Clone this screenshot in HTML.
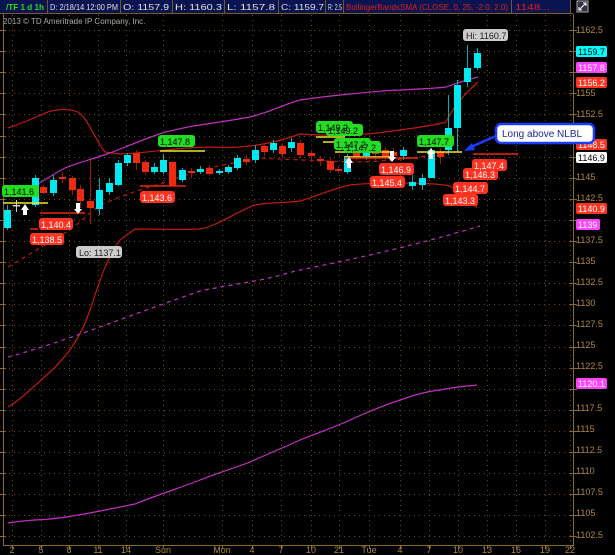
<!DOCTYPE html>
<html><head><meta charset="utf-8"><style>
html,body{margin:0;padding:0;background:#000;width:615px;height:555px;overflow:hidden;font-family:"Liberation Sans",sans-serif}
svg{position:absolute;left:0;top:0}
</style></head><body>
<svg width="615" height="555" viewBox="0 0 615 555" xmlns="http://www.w3.org/2000/svg" font-family="Liberation Sans, sans-serif">
<rect width="615" height="555" fill="#000"/>
<!-- header -->
<rect x="0" y="0" width="571" height="13" fill="#0a1450"/>
<line x1="0" y1="13.5" x2="573" y2="13.5" stroke="#7a5a20"/>
<g stroke="#6a5a30" stroke-width="1">
<line x1="47.5" y1="0" x2="47.5" y2="13"/><line x1="120.5" y1="0" x2="120.5" y2="13"/><line x1="172.5" y1="0" x2="172.5" y2="13"/><line x1="224.5" y1="0" x2="224.5" y2="13"/><line x1="278.5" y1="0" x2="278.5" y2="13"/><line x1="325.5" y1="0" x2="325.5" y2="13"/><line x1="343.5" y1="0" x2="343.5" y2="13"/><line x1="511.5" y1="0" x2="511.5" y2="13"/><line x1="570.5" y1="0" x2="570.5" y2="13"/>
</g>
<g font-size="8.5" fill="#e0e0e0" lengthAdjust="spacingAndGlyphs">
<text x="6" y="10" fill="#22dd22" font-weight="bold" textLength="38" lengthAdjust="spacingAndGlyphs">/TF 1 d 1h</text>
<text x="50" y="10" textLength="68" lengthAdjust="spacingAndGlyphs">D: 2/18/14 12:00 PM</text>
<text x="123" y="10" textLength="46" lengthAdjust="spacingAndGlyphs">O: 1157.9</text>
<text x="175" y="10" textLength="47" lengthAdjust="spacingAndGlyphs">H: 1160.3</text>
<text x="227" y="10" textLength="48" lengthAdjust="spacingAndGlyphs">L: 1157.8</text>
<text x="281" y="10" textLength="43" lengthAdjust="spacingAndGlyphs">C: 1159.7</text>
<text x="328" y="10" textLength="14" lengthAdjust="spacingAndGlyphs">R: 2.5</text>
<text x="346" y="10" fill="#e02020" textLength="162" lengthAdjust="spacingAndGlyphs">BollingerBandsSMA (CLOSE, 0, 25, -2.0, 2.0)</text>
<text x="515" y="10" fill="#e02020" textLength="35" lengthAdjust="spacingAndGlyphs">1148...</text>
</g>
<rect x="577" y="1" width="11" height="11" fill="#334" stroke="#aaa"/>
<path d="M579 10 L586 3 M583 3 H586 V6 M579 7 V10 H582" stroke="#fff" fill="none"/>
<text x="3" y="24" font-size="8" fill="#aaa">2013 © TD Ameritrade IP Company, Inc.</text>
<!-- grid -->
<g id="grid" stroke="#6a4a15" stroke-width="1" stroke-dasharray="1,4"></g>
<!-- axes -->
<line x1="573.5" y1="14" x2="573.5" y2="545" stroke="#8a6a2a"/>
<line x1="3.5" y1="14" x2="3.5" y2="545" stroke="#8a6a2a"/>
<line x1="3" y1="545.5" x2="574" y2="545.5" stroke="#8a6a2a"/>
<g id="ticks" stroke="#8a6a2a"></g>
<g font-size="9" fill="#b08a40">
<text x="576" y="33">1162.5</text>
<text x="576" y="96">1155</text>
<text x="576" y="117">1152.5</text>
<text x="576" y="180">1145</text>
<text x="576" y="201">1142.5</text>
<text x="576" y="243">1137.5</text>
<text x="576" y="264">1135</text>
<text x="576" y="285">1132.5</text>
<text x="576" y="306">1130</text>
<text x="576" y="327">1127.5</text>
<text x="576" y="348">1125</text>
<text x="576" y="369">1122.5</text>
<text x="576" y="411">1117.5</text>
<text x="576" y="432">1115</text>
<text x="576" y="453">1112.5</text>
<text x="576" y="474">1110</text>
<text x="576" y="495">1107.5</text>
<text x="576" y="516">1105</text>
<text x="576" y="538">1102.5</text>
</g>
<!-- right colored labels -->
<g font-size="9">
<rect x="576" y="46" width="31" height="11" rx="2" fill="#00ffff"/><text x="578" y="55" fill="#000">1159.7</text>
<rect x="576" y="62" width="31" height="11" rx="2" fill="#ff44ff"/><text x="578" y="71" fill="#fff">1157.8</text>
<rect x="576" y="77" width="31" height="11" rx="2" fill="#ff3322"/><text x="578" y="86" fill="#fff">1156.2</text>
<rect x="576" y="139" width="31" height="11" rx="2" fill="#ff3322"/><text x="578" y="148" fill="#fff">1148.5</text>
<rect x="576" y="152" width="31" height="11" rx="2" fill="#ffffff"/><text x="578" y="161" fill="#000">1146.9</text>
<rect x="576" y="203" width="31" height="11" rx="2" fill="#ff3322"/><text x="578" y="212" fill="#fff">1140.9</text>
<rect x="576" y="219" width="24" height="11" rx="2" fill="#ff44ff"/><text x="578" y="228" fill="#fff">1139</text>
<rect x="576" y="378" width="31" height="11" rx="2" fill="#ff44ff"/><text x="578" y="387" fill="#fff">1120.1</text>
</g>
<!-- x labels -->
<g font-size="9" fill="#b08a40" text-anchor="middle">
<text x="12" y="553">2</text><text x="41" y="553">5</text><text x="69" y="553">8</text><text x="98" y="553">11</text><text x="126" y="553">14</text><text x="163" y="553">Sun</text><text x="222" y="553">Mon</text><text x="252" y="553">4</text><text x="281" y="553">7</text><text x="311" y="553">10</text><text x="339" y="553">21</text><text x="369" y="553">Tue</text><text x="400" y="553">4</text><text x="429" y="553">7</text><text x="458" y="553">10</text><text x="487" y="553">13</text><text x="516" y="553">16</text><text x="545" y="553">19</text><text x="570" y="553">22</text>
</g>
<!-- bands -->
<g fill="none" stroke-width="1.2">
<path stroke="#c01a10" d="M8,128 C20,124 30,120 45,113 C55,109 68,108 78,112 C88,118 95,140 105,152 L120,154 C150,153 180,147 210,147 C240,149 270,145 300,134 C330,136 360,136 400,130 C430,126 440,124 446,122 C452,110 460,98 478,82"/>
<path stroke="#c01a10" d="M8,407 C20,400 30,390 50,372 C65,358 80,340 90,310 C97,290 105,260 120,240 L135,229 C160,229 185,230 200,229 C215,227 240,210 255,205 C270,202 285,203 300,201 C320,195 335,188 350,185 C370,183 390,183 400,183 C420,183 440,184 450,186 C460,192 470,200 477,208"/>
<path stroke="#c01a10" stroke-dasharray="4,4" d="M8,267 C25,257 40,248 60,236 C80,224 90,212 100,205 C120,197 130,193 140,190 C170,181 190,174 200,170 C230,163 250,160 260,158 C280,159 300,160 350,162 C380,162 400,160 455,152"/>
<path stroke="#c030c0" d="M33,187 C45,180 55,173 65,168 C80,162 90,160 110,153 C130,145 150,137 165,132 C180,129 190,126 200,125 C220,122 240,119 250,117 C270,112 285,104 300,100 C320,97 340,95 350,94 C370,92 390,90 400,90 C420,89 440,88 446,87 C455,84 465,80 478,77"/>
<path stroke="#c030c0" stroke-dasharray="4,4" d="M8,357 C30,351 50,345 100,327 C130,316 160,305 200,291 C230,285 250,282 260,280 C280,276 290,272 300,270 C360,258 420,244 480,226"/>
<path stroke="#c030c0" d="M8,523 C25,520 40,520 50,519 C70,517 85,514 100,511 C115,508 125,506 135,504 C160,494 185,486 200,480 C220,472 235,468 250,462 C270,453 285,447 300,440 C320,432 340,425 350,420 C370,411 385,405 400,400 C420,393 430,391 440,390 C455,387 465,386 477,385"/>
</g>
<!-- candles -->
<g id="candles"></g>
<!-- yellow lines -->
<g stroke="#e8e830" stroke-width="1.5">
<line x1="3" y1="203" x2="48" y2="203"/>
<line x1="160" y1="151" x2="205" y2="151"/>
<line x1="316" y1="137" x2="345" y2="137"/>
<line x1="323" y1="142" x2="345" y2="142"/>
<line x1="335" y1="152" x2="390" y2="152"/>
<line x1="345" y1="157" x2="390" y2="157"/>
<line x1="417" y1="152" x2="462" y2="152"/>
</g>
<!-- red level lines -->
<g stroke="#ee2211" stroke-width="1.5">
<line x1="40" y1="213" x2="85" y2="213"/>
<line x1="30" y1="229" x2="38" y2="229"/>
<line x1="140" y1="186" x2="186" y2="186"/>
<line x1="345" y1="158" x2="418" y2="158"/>
<line x1="473" y1="154" x2="518" y2="154"/>
</g>
<!-- arrows -->
<g fill="#fff">
<path d="M21,210 l4,-6 l4,6 h-2 v5 h-4 v-5z"/>
<path d="M76,203 h4 v6 h2 l-4,5 l-4,-5 h2z"/>
<path d="M345,163 l4,-6 l4,6 h-2 v5 h-4 v-5z"/>
<path d="M390,151 h4 v6 h2 l-4,5 l-4,-5 h2z"/>
<path d="M427,154 l4,-6 l4,6 h-2 v5 h-4 v-5z"/>
</g>
<!-- price bubbles -->
<g font-size="9">
<g fill="#22dd22"><rect x="2" y="185" width="37" height="12" rx="3"/><rect x="158" y="135" width="37" height="12" rx="3"/><rect x="316" y="121" width="37" height="12" rx="3"/><rect x="326" y="124" width="37" height="12" rx="3"/><rect x="334" y="138" width="37" height="12" rx="3"/><rect x="344" y="141" width="37" height="12" rx="3"/><rect x="417" y="135" width="37" height="12" rx="3"/></g>
<g fill="#000"><text x="4" y="195">1,141.6</text><text x="160" y="145">1,147.8</text><text x="318" y="131">1,149.2</text><text x="328" y="134">1,149.2</text><text x="336" y="148">1,147.2</text><text x="346" y="151">1,147.2</text><text x="419" y="145">1,147.7</text></g>
<g fill="#ff3322"><rect x="39" y="218" width="34" height="12" rx="3"/><rect x="30" y="233" width="34" height="12" rx="3"/><rect x="140" y="191" width="35" height="12" rx="3"/><rect x="379" y="163" width="35" height="12" rx="3"/><rect x="370" y="176" width="35" height="12" rx="3"/><rect x="472" y="159" width="35" height="12" rx="3"/><rect x="463" y="168" width="35" height="12" rx="3"/><rect x="453" y="182" width="35" height="12" rx="3"/><rect x="443" y="194" width="35" height="12" rx="3"/></g>
<g fill="#fff"><text x="41" y="228">1,140.4</text><text x="32" y="243">1,138.5</text><text x="142" y="201">1,143.6</text><text x="381" y="173">1,146.9</text><text x="372" y="186">1,145.4</text><text x="474" y="169">1,147.4</text><text x="465" y="178">1,146.3</text><text x="455" y="192">1,144.7</text><text x="445" y="204">1,143.3</text></g>
<rect x="76" y="246" width="46" height="12" rx="3" fill="#ccc"/><text x="79" y="256" fill="#222">Lo: 1137.1</text>
<rect x="463" y="29" width="45" height="12" rx="3" fill="#ccc"/><text x="466" y="39" fill="#222">Hi: 1160.7</text>
</g>
<!-- callout -->
<rect x="496" y="124" width="98" height="19" rx="5" fill="#fff" stroke="#1a3cff" stroke-width="2.5"/>
<text x="502" y="137" font-size="10" fill="#1a2a8a">Long above NLBL</text>
<path d="M496,136 L471,147" stroke="#1a3cff" stroke-width="2.5"/>
<path d="M464,151 l8,-8 l3,7z" fill="#1a3cff"/>
</svg>
<script>
var NS="http://www.w3.org/2000/svg";
function el(p,t,a){var e=document.createElementNS(NS,t);for(var k in a)e.setAttribute(k,a[k]);p.appendChild(e);return e;}
var g=document.getElementById('grid');
for(var i=0;i<=24;i++){var y=Math.round(30+i*21.1)+0.5;el(g,'line',{x1:4,y1:y,x2:573,y2:y});el(document.getElementById('ticks'),'line',{x1:570,y1:y,x2:577,y2:y});el(document.getElementById('ticks'),'line',{x1:0,y1:y,x2:6,y2:y});}
[12,41,69,98,126,163,222,252,281,311,339,369,400,429,458,487,516,545,570].forEach(function(x){el(g,'line',{x1:x+.5,y1:15,x2:x+.5,y2:545});el(document.getElementById('ticks'),'line',{x1:x+.5,y1:545,x2:x+.5,y2:549});});
var C=[[7,210,228,205,230,'c'],[16,205,206,200,212,'w'],[35,178,205,175,207,'c'],[43,187,193,185,194,'r'],[53,180,193,175,196,'c'],[62,177,179,172,183,'r'],[72,178,190,176,195,'r'],[80,189,201,185,208,'r'],[90,201,208,160,224,'r'],[99,190,209,178,215,'c'],[109,183,192,178,195,'c'],[118,163,185,160,186,'c'],[127,155,163,153,166,'c'],[136,153,163,150,170,'r'],[145,162,172,160,175,'r'],[154,167,172,163,174,'c'],[163,160,172,154,174,'c'],[172,162,186,162,186,'r'],[182,170,180,168,182,'c'],[191,171,173,168,178,'r'],[200,169,172,166,174,'c'],[209,168,174,165,176,'r'],[219,171,173,169,175,'c'],[228,167,172,165,174,'c'],[237,158,168,155,170,'c'],[246,159,162,155,165,'r'],[255,150,160,145,163,'c'],[264,146,152,143,156,'r'],[273,143,150,140,153,'c'],[282,146,154,143,158,'r'],[291,142,148,138,152,'c'],[300,143,155,140,158,'r'],[311,153,156,150,162,'r'],[320,159,161,156,166,'r'],[330,161,170,158,173,'r'],[338,169,171,166,173,'r'],[347,156,172,154,174,'c'],[356,153,158,150,161,'r'],[366,150,156,147,160,'c'],[375,150,154,147,160,'r'],[385,150,157,147,161,'r'],[393,152,156,148,160,'r'],[403,150,156,147,160,'c'],[412,182,186,175,190,'c'],[422,178,185,174,190,'c'],[431,150,178,148,178,'c'],[440,152,157,148,164,'r'],[448,128,150,95,155,'c'],[457,85,128,80,152,'c'],[467,68,82,45,87,'c'],[477,53,68,48,70,'c']];
var cg=document.getElementById('candles');
C.forEach(function(d){var col=d[5]=='c'?'#00e8f0':(d[5]=='r'?'#ee2a10':'#ccc');var wc=d[5]=='c'?'#00b0b8':(d[5]=='r'?'#a01808':'#ccc');
el(cg,'line',{x1:d[0]+.5,y1:d[3],x2:d[0]+.5,y2:d[4],stroke:wc});
el(cg,'rect',{x:d[0]-3,y:d[1],width:7,height:Math.max(1.5,d[2]-d[1]),fill:col});});
</script>
</body></html>
